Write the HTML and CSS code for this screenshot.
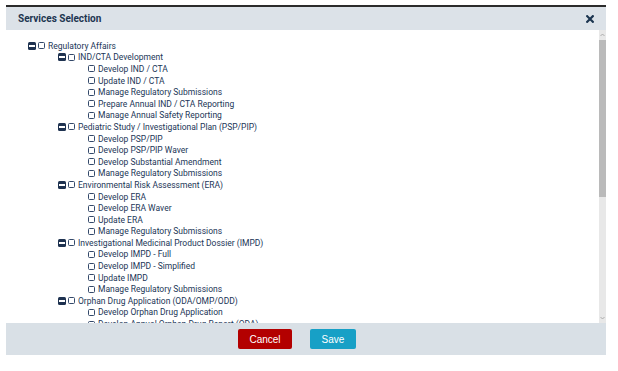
FILE: index.html
```html
<!DOCTYPE html>
<html>
<head>
    <title>Services Selection</title>
    <meta charset="utf-8" />
    <link rel="stylesheet" href="styles.css">
</head>
<body>
    <div class="dialog">
        <div class="dialog-header">
            <span class="dialog-title">Services Selection</span>
            <button class="close" aria-label="close">
                <svg width="8" height="8" viewBox="0 0 8 8"><path d="M1.2 1.2 L6.8 6.8 M6.8 1.2 L1.2 6.8" stroke="#1c3550" stroke-width="2.2" stroke-linecap="square" /></svg>
            </button>
        </div>
        <div class="dialog-body">
            <div class="tree-pane">
                <ul class="tree">
                    <li>
                        <div class="row"><span class="toggle"></span><span class="check"></span>Regulatory Affairs</div>
                        <ul>
                            <li>
                                <div class="row"><span class="toggle"></span><span class="check"></span>IND/CTA Development</div>
                                <ul>
                                    <li><div class="row"><span class="check"></span>Develop IND / CTA</div></li>
                                    <li><div class="row"><span class="check"></span>Update IND / CTA</div></li>
                                    <li><div class="row"><span class="check"></span>Manage Regulatory Submissions</div></li>
                                    <li><div class="row"><span class="check"></span>Prepare Annual IND / CTA Reporting</div></li>
                                    <li><div class="row"><span class="check"></span>Manage Annual Safety Reporting</div></li>
                                </ul>
                            </li>
                            <li>
                                <div class="row"><span class="toggle"></span><span class="check"></span>Pediatric Study / Investigational Plan (PSP/PIP)</div>
                                <ul>
                                    <li><div class="row"><span class="check"></span>Develop PSP/PIP</div></li>
                                    <li><div class="row"><span class="check"></span>Develop PSP/PIP Waver</div></li>
                                    <li><div class="row"><span class="check"></span>Develop Substantial Amendment</div></li>
                                    <li><div class="row"><span class="check"></span>Manage Regulatory Submissions</div></li>
                                </ul>
                            </li>
                            <li>
                                <div class="row"><span class="toggle"></span><span class="check"></span>Environmental Risk Assessment (ERA)</div>
                                <ul>
                                    <li><div class="row"><span class="check"></span>Develop ERA</div></li>
                                    <li><div class="row"><span class="check"></span>Develop ERA Waver</div></li>
                                    <li><div class="row"><span class="check"></span>Update ERA</div></li>
                                    <li><div class="row"><span class="check"></span>Manage Regulatory Submissions</div></li>
                                </ul>
                            </li>
                            <li>
                                <div class="row"><span class="toggle"></span><span class="check"></span>Investigational Medicinal Product Dossier (IMPD)</div>
                                <ul>
                                    <li><div class="row"><span class="check"></span>Develop IMPD - Full</div></li>
                                    <li><div class="row"><span class="check"></span>Develop IMPD - Simplified</div></li>
                                    <li><div class="row"><span class="check"></span>Update IMPD</div></li>
                                    <li><div class="row"><span class="check"></span>Manage Regulatory Submissions</div></li>
                                </ul>
                            </li>
                            <li>
                                <div class="row"><span class="toggle"></span><span class="check"></span>Orphan Drug Application (ODA/OMP/ODD)</div>
                                <ul>
                                    <li><div class="row"><span class="check"></span>Develop Orphan Drug Application</div></li>
                                    <li><div class="row"><span class="check"></span>Develop Annual Orphan Drug Report (ODA)</div></li>
                                </ul>
                            </li>
                        </ul>
                    </li>
                </ul>
            </div>
            <div class="scrollbar">
                <div class="scroll-arrow">
                    <svg width="5" height="4" viewBox="0 0 5 4"><path d="M0.5 3 L2.5 1 L4.5 3" fill="none" stroke="#a0a0a0" stroke-width="0.8" /></svg>
                </div>
                <div class="scroll-thumb"></div>
                <div class="scroll-rest"></div>
                <div class="scroll-arrow">
                    <svg width="5" height="4" viewBox="0 0 5 4"><path d="M0.5 1 L2.5 3 L4.5 1" fill="none" stroke="#a0a0a0" stroke-width="0.8" /></svg>
                </div>
            </div>
        </div>
        <div class="dialog-footer">
            <button class="btn btn-cancel">Cancel</button>
            <button class="btn btn-save">Save</button>
        </div>
    </div>
</body>
</html>
```

FILE: styles.css
```css
body {
    margin: 0;
    background-color: #fff;
    font-family: Roboto, "Liberation Sans", sans-serif;
}
.dialog {
    width: 600px;
    margin: 5px 0 0 6px;
    border-top: 2px solid #2b2b2b;
}
.dialog-header {
    height: 23px;
    background-color: #dce2e8;
    display: flex;
    align-items: center;
    justify-content: space-between;
    padding: 0 12px 0 12px;
}
.dialog-title {
    font-size: 10px;
    font-weight: bold;
    color: #1c3550;
}
button.close {
    border: none;
    background: none;
    padding: 0;
    width: 8px;
    height: 8px;
    display: flex;
}
.dialog-body {
    height: 293px;
    display: flex;
    background-color: #fff;
}
.tree-pane {
    flex: 1;
    overflow: hidden;
    padding: 10px 0 0 22px;
}
.scrollbar {
    width: 7px;
    display: flex;
    flex-direction: column;
    background-color: #e8e8e8;
}
.scroll-arrow {
    height: 10px;
    display: flex;
    align-items: center;
    justify-content: center;
}
.scroll-thumb {
    height: 157px;
    background-color: #bababa;
}
.scroll-rest {
    flex: 1;
}
ul.tree, ul.tree ul {
    list-style: none;
    margin: 0;
    padding: 0;
}
ul.tree ul {
    padding-left: 30px;
}
.row {
    display: flex;
    align-items: center;
    height: 11.6px;
    font-size: 8.5px;
    color: #1b3657;
    white-space: nowrap;
}
.toggle {
    width: 8px;
    height: 8px;
    border-radius: 1.5px;
    background-color: #1e3250;
    margin-right: 2px;
    display: flex;
    align-items: center;
    justify-content: center;
}
.toggle::after {
    content: "";
    width: 6px;
    height: 2px;
    background-color: #fff;
}
.check {
    width: 5px;
    height: 5px;
    border: 1px solid #34496a;
    border-radius: 1.5px;
    margin-right: 3px;
}
.dialog-footer {
    height: 32px;
    background-color: #d9e0e6;
    display: flex;
    align-items: center;
    justify-content: center;
    gap: 18px;
    padding-right: 18px;
}
.btn {
    width: 54px;
    height: 20px;
    border: none;
    border-radius: 2px;
    color: #fff;
    font-family: "Liberation Sans", Arial, sans-serif;
    font-size: 10px;
    padding: 0;
}
.btn-cancel {
    background-color: #b30000;
}
.btn-save {
    width: 46px;
    background-color: #17a0c6;
}
```
